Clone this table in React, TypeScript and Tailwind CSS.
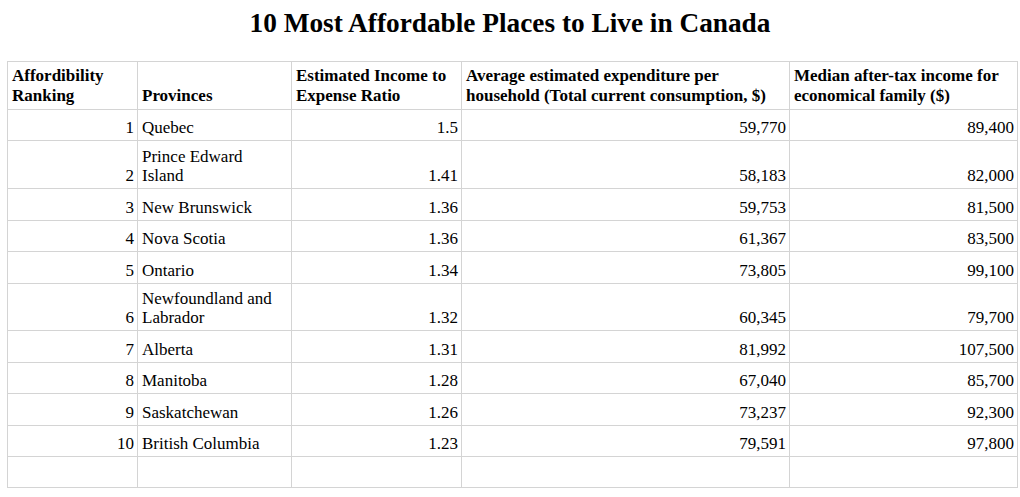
import React from "react";

type Row = {
  rank: number;
  province: React.ReactNode;
  ratio: string;
  expenditure: string;
  income: string;
  h: string;
};

const rows: Row[] = [
  { rank: 1, province: "Quebec", ratio: "1.5", expenditure: "59,770", income: "89,400", h: "h-[31px]" },
  {
    rank: 2,
    province: (
      <>
        Prince Edward
        <br />
        Island
      </>
    ),
    ratio: "1.41",
    expenditure: "58,183",
    income: "82,000",
    h: "h-[48px]",
  },
  { rank: 3, province: "New Brunswick", ratio: "1.36", expenditure: "59,753", income: "81,500", h: "h-[32px]" },
  { rank: 4, province: "Nova Scotia", ratio: "1.36", expenditure: "61,367", income: "83,500", h: "h-[31px]" },
  { rank: 5, province: "Ontario", ratio: "1.34", expenditure: "73,805", income: "99,100", h: "h-[32px]" },
  {
    rank: 6,
    province: (
      <>
        Newfoundland and
        <br />
        Labrador
      </>
    ),
    ratio: "1.32",
    expenditure: "60,345",
    income: "79,700",
    h: "h-[47px]",
  },
  { rank: 7, province: "Alberta", ratio: "1.31", expenditure: "81,992", income: "107,500", h: "h-[32px]" },
  { rank: 8, province: "Manitoba", ratio: "1.28", expenditure: "67,040", income: "85,700", h: "h-[31px]" },
  { rank: 9, province: "Saskatchewan", ratio: "1.26", expenditure: "73,237", income: "92,300", h: "h-[32px]" },
  { rank: 10, province: "British Columbia", ratio: "1.23", expenditure: "79,591", income: "97,800", h: "h-[31px]" },
];

const cell = "border border-[#d4d4d4] align-bottom px-0 pb-[3px] leading-[19px]";
const num = `${cell} text-right pr-[3px]`;
const txt = `${cell} text-left pl-[4px] pr-[2px]`;
const head = "border border-[#d4d4d4] align-bottom text-left font-bold pl-[4px] pr-[2px] pb-[4px] leading-[19.5px]";

export default function App() {
  return (
    <div className="min-h-[497px] bg-white text-black font-['Liberation_Serif','Times_New_Roman',serif]">
      <h1 className="pt-[8px] text-center text-[27.3px] font-bold leading-[30px]">
        10 Most Affordable Places to Live in Canada
      </h1>
      <table className="mt-[23px] ml-[7px] w-[1010px] table-fixed border-collapse text-[17px]">
        <colgroup>
          <col className="w-[130px]" />
          <col className="w-[154px]" />
          <col className="w-[170px]" />
          <col className="w-[328px]" />
          <col className="w-[228px]" />
        </colgroup>
        <thead>
          <tr className="h-[48px]">
            <th className={head}>
              Affordibility
              <br />
              Ranking
            </th>
            <th className={head}>Provinces</th>
            <th className={head}>
              Estimated Income to
              <br />
              Expense Ratio
            </th>
            <th className={head}>
              Average estimated expenditure per
              <br />
              household (Total current consumption, $)
            </th>
            <th className={head}>
              Median after-tax income for
              <br />
              economical family ($)
            </th>
          </tr>
        </thead>
        <tbody>
          {rows.map((r) => (
            <tr key={r.rank} className={r.h}>
              <td className={num}>{r.rank}</td>
              <td className={txt}>{r.province}</td>
              <td className={num}>{r.ratio}</td>
              <td className={num}>{r.expenditure}</td>
              <td className={num}>{r.income}</td>
            </tr>
          ))}
          <tr className="h-[31px]">
            <td className={cell}></td>
            <td className={cell}></td>
            <td className={cell}></td>
            <td className={cell}></td>
            <td className={cell}></td>
          </tr>
        </tbody>
      </table>
    </div>
  );
}
